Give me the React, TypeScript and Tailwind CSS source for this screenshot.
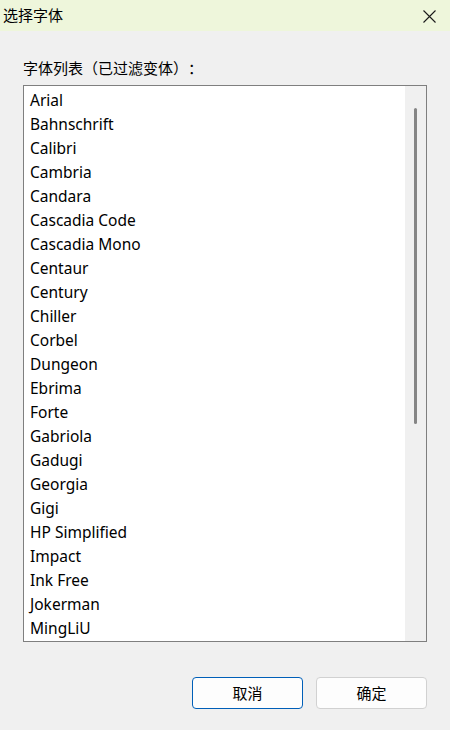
import React from "react";

const fonts = [
  "Arial",
  "Bahnschrift",
  "Calibri",
  "Cambria",
  "Candara",
  "Cascadia Code",
  "Cascadia Mono",
  "Centaur",
  "Century",
  "Chiller",
  "Corbel",
  "Dungeon",
  "Ebrima",
  "Forte",
  "Gabriola",
  "Gadugi",
  "Georgia",
  "Gigi",
  "HP Simplified",
  "Impact",
  "Ink Free",
  "Jokerman",
  "MingLiU",
];

const uiFont = { fontFamily: '"Noto Sans", "Noto Sans CJK SC", sans-serif' };

export default function App() {
  return (
    <div className="w-[450px] h-[730px] flex flex-col bg-[#f0f0f0] text-[#1a1a1a] overflow-hidden" style={uiFont}>
      {/* title bar */}
      <div className="h-[31px] shrink-0 flex items-center justify-between bg-[#eef6db] pl-[3px] pr-[14px]">
        <span className="text-[15px] leading-none text-black">选择字体</span>
        <svg width="13" height="13" viewBox="0 0 13 13" className="mt-[1px]">
          <path d="M0.5 0.5 L12.5 12.5 M12.5 0.5 L0.5 12.5" stroke="#1a1a1a" strokeWidth="1.1" fill="none" />
        </svg>
      </div>

      <div className="flex-1 flex flex-col px-[23px] pt-[27px]">
        <div className="text-[15px] leading-[20px] text-black [text-spacing-trim:space-all]">字体列表（已过滤变体）：</div>

        {/* list box */}
        <div className="mt-[7px] h-[557px] flex border border-[#7f7f7f] bg-white">
          <div className="flex-1 flex flex-col pt-[3px] pl-[6px] overflow-hidden">
            {fonts.map((f) => (
              <div key={f} className="h-[24px] shrink-0 flex items-center text-[15.5px] text-black whitespace-nowrap">
                {f}
              </div>
            ))}
          </div>
          <div className="w-[21px] shrink-0 bg-[#f0f0f0] flex justify-center pt-[22px]">
            <div className="w-[3px] h-[316px] rounded-full bg-[#858585]" />
          </div>
        </div>

        {/* buttons */}
        <div className="mt-[35px] flex justify-end gap-[13px]">
          <button className="w-[111px] h-[32px] rounded-[4px] border border-[#005fb8] bg-[#fdfdfd] text-[15px] text-black flex items-center justify-center">
            取消
          </button>
          <button className="w-[111px] h-[32px] rounded-[4px] border border-[#d1d1d1] bg-[#fdfdfd] text-[15px] text-black flex items-center justify-center">
            确定
          </button>
        </div>
      </div>
    </div>
  );
}
